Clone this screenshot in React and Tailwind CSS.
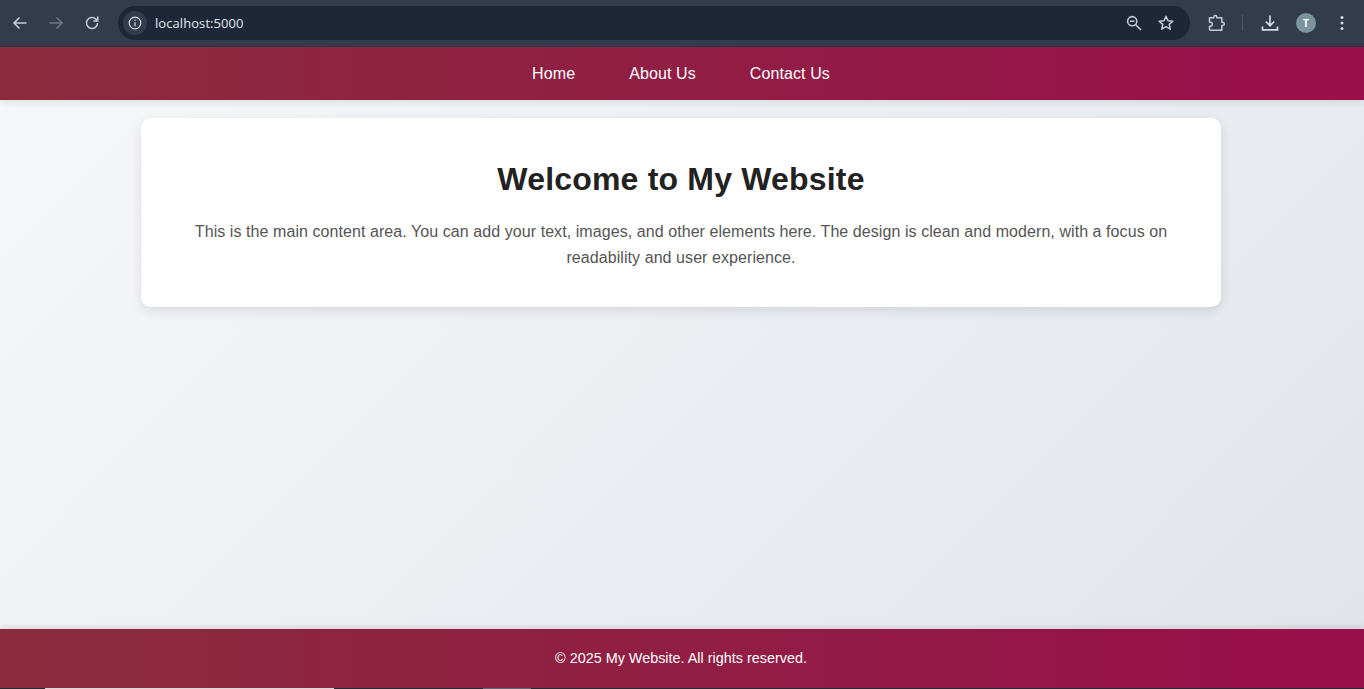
import React from "react";

const NavLink = ({ children }) => (
  <a className="text-white text-base tracking-[0.1px]" href="#">
    {children}
  </a>
);

const ChromeBar = () => (
  <div className="flex items-center h-[47px] bg-[#333c4d] border-b border-[#2c3544] rounded-tr-lg">
    <svg className="ml-[11px] w-[18px] h-[18px]" viewBox="0 0 18 18" fill="none" stroke="#c3cbd8" strokeWidth="1.6">
      <path d="M15.5 9H3.5M8.5 3.5L3 9l5.5 5.5" />
    </svg>
    <svg className="ml-[18px] w-[18px] h-[18px]" viewBox="0 0 18 18" fill="none" stroke="#6d7686" strokeWidth="1.6">
      <path d="M2.5 9h12M9.5 3.5L15 9l-5.5 5.5" />
    </svg>
    <svg className="ml-[18px] w-[18px] h-[18px]" viewBox="0 0 18 18" fill="none" stroke="#c3cbd8" strokeWidth="1.6">
      <path d="M14.5 9a5.5 5.5 0 1 1-1.6-3.9L14.5 6.7" />
      <path d="M14.7 2.6v4.4h-4.4" />
    </svg>
    <div className="flex items-center ml-[17px] w-[1072px] h-[34px] rounded-full bg-[#1d2738]">
      <div className="flex items-center justify-center ml-[5px] w-6 h-6 rounded-full bg-[#333c4d]">
        <svg className="w-[14px] h-[14px]" viewBox="0 0 14 14" fill="none" stroke="#d5dbe5" strokeWidth="1.2">
          <circle cx="7" cy="7" r="5.8" />
          <path d="M7 6.2v4M7 3.6v1.3" />
        </svg>
      </div>
      <span className="ml-[8px] pt-[2px] text-[13px] tracking-[0.07px] text-[#e3e8f0] font-['Open_Sans',sans-serif]">localhost:5000</span>
      <svg className="ml-auto w-[18px] h-[18px]" viewBox="0 0 18 18" fill="none" stroke="#c3cbd8" strokeWidth="1.6">
        <circle cx="7.2" cy="7.2" r="4.6" />
        <path d="M10.7 10.7L16 16M5 7.2h4.4" />
      </svg>
      <svg className="ml-[14px] mr-[15px] w-[18px] h-[18px]" viewBox="0 0 18 18" fill="none" stroke="#c3cbd8" strokeWidth="1.5" strokeLinejoin="round">
        <path d="M9 2.2l2 4.5 4.9.5-3.7 3.2 1.1 4.8L9 12.7l-4.3 2.5 1.1-4.8L2.100 7.200l4.900-.5z" />
      </svg>
    </div>
    <svg className="ml-[18px] w-[18px] h-[18px]" viewBox="0 0 18 18" fill="none" stroke="#c3cbd8" strokeWidth="1.5" strokeLinejoin="round">
      <path d="M1.500 3.800h4.300v-.8a1.500 1.500 0 0 1 3 0v.8h5v4.400h.8a1.700 1.700 0 0 1 0 3.400h-.8v4.600H2.500a1 1 0 0 1-1-1v-3h.8a2 2 0 0 0 0-4h-.8z" />
    </svg>
    <div className="ml-[16px] w-px h-[16px] bg-[#4d5769]"></div>
    <svg className="ml-[18px] w-[18px] h-[18px]" viewBox="0 0 18 18" fill="none" stroke="#d5dbe5" strokeWidth="1.7">
      <path d="M9 1.500v10M4.800 7.500L9 11.700l4.200-4.200M1.500 12.500v3.300h15v-3.300" />
    </svg>
    <div className="flex items-center justify-center ml-[17px] w-5 h-5 rounded-full bg-[#7b949e] text-[10px] font-bold text-white font-['Open_Sans',sans-serif]">
      T
    </div>
    <svg className="ml-[17px] w-[18px] h-[18px]" viewBox="0 0 18 18" fill="#d5dbe5">
      <circle cx="9" cy="3.500" r="1.500" />
      <circle cx="9" cy="9" r="1.500" />
      <circle cx="9" cy="14.500" r="1.500" />
    </svg>
  </div>
);

export default function App() {
  return (
    <div className="flex flex-col h-[689px] overflow-hidden bg-[#333c4d] font-['Liberation_Sans',Arial,sans-serif]">
      <ChromeBar />
      <header className="relative z-10 flex items-center justify-center gap-[54px] h-[53px] shrink-0 pr-[2px] bg-linear-[90deg,#8a2c3e,#990f4a] shadow-[0_2px_8px_rgba(0,0,0,0.1)]">
        <NavLink>Home</NavLink>
        <NavLink>About Us</NavLink>
        <NavLink>Contact Us</NavLink>
      </header>
      <main className="flex-1 pt-[18px] pl-[141px] bg-linear-[135deg,#f6f7f9,#e1e5eb]">
        <div className="w-[1080px] h-[189px] pt-[41px] px-10 bg-white rounded-[10px] shadow-[0_4px_12px_rgba(0,0,0,0.1)] text-center">
          <h1 className="text-[32px] leading-10 font-bold tracking-[0.19px] text-[#222222]">Welcome to My Website</h1>
          <p className="mt-[20px] text-base leading-[26px] tracking-[0.07px] text-[#555555]">
            This is the main content area. You can add your text, images, and other elements here. The design is clean and modern, with a focus on readability and user experience.
          </p>
        </div>
      </main>
      <footer className="relative flex items-center justify-center h-[60px] shrink-0 pr-[2px] bg-linear-[90deg,#8a2c3e,#990f4a] shadow-[0_-2px_6px_rgba(0,0,0,0.1)]">
        <p className="pb-px text-[14.4px] text-white">© 2025 My Website. All rights reserved.</p>
        <div className="absolute bottom-0 left-0 right-0 flex h-px bg-[#1f2a33]">
          <div className="ml-[45px] w-[289px] bg-[#d8d8d8]"></div>
          <div className="ml-[149px] w-[48px] bg-[#5c6670]"></div>
        </div>
      </footer>
    </div>
  );
}
